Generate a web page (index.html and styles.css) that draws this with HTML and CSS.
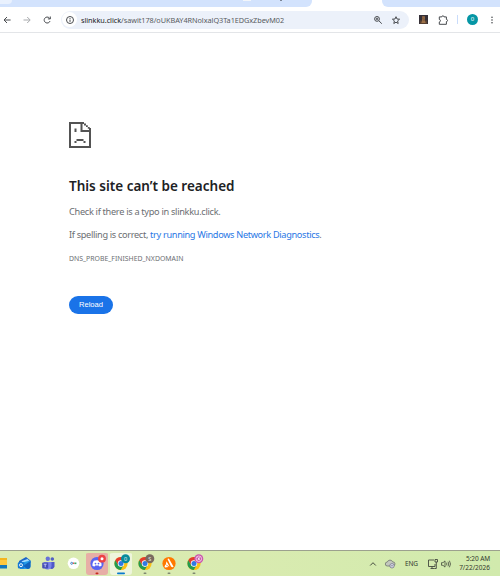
FILE: index.html
```
<!DOCTYPE html>
<html lang="en">
<head>
  <meta charset="UTF-8">
  <meta name="viewport" content="width=device-width, initial-scale=1.0">
  <title>slinkku.click</title>
  <link rel="stylesheet" href="styles.css">
</head>
<body>
  <div class="tabs">
    <div class="tabs-left">
      <span class="tab-btn"></span>
      <span class="tab-icon"></span>
      <span class="tab-mark"></span>
    </div>
    <div class="tabs-right"></div>
  </div>

  <header class="toolbar">
    <svg class="nav back" viewBox="0 0 10 10"><path d="M8.600 5H2.300M5 2L2 5l3 3"/></svg>
    <svg class="nav forward" viewBox="0 0 10 10"><path d="M1.500 5h6.300M5.200 2l3 3-3 3"/></svg>
    <svg class="nav reload" viewBox="0 0 10 10"><path d="M8 6.100A3 3 0 1 1 7.300 2.900L8.100 3.700M8.300 1.500v2.400H5.900"/></svg>
    <div class="omnibox">
      <span class="site-info">
        <svg viewBox="0 0 10 10"><circle cx="5" cy="5" r="3.5"/><path d="M5 4.600v2.300M5 3v.9"/></svg>
      </span>
      <span class="url"><b>slinkku.click</b>/sawit178/oUKBAY4RNolxalQ3Ta1EDGxZbevM02</span>
      <svg class="zoom" viewBox="0 0 10 10"><circle cx="4" cy="3.900" r="2.400"/><path d="M5.900 5.800l2.900 2.900M2.800 3.900h2.400M4 2.700v2.400"/></svg>
      <svg class="star" viewBox="0 0 10 10"><path d="M5 1.700l1 2.300 2.600.2-2 1.700.6 2.600L5 7.200 2.800 8.500l.6-2.600-2-1.700L4 4z"/></svg>
    </div>
    <svg class="ext" viewBox="0 0 10 10"><path fill="#343038" d="M0 0h10v10H0z"/><path fill="#594132" d="M1 6h8v4H1z"/><path fill="#9d7148" d="M3.500 1.500h3V6l1 3h-5l1-3z"/><path fill="#4f352b" d="M4 3h1v1H4zM5 5h1v1H5z"/></svg>
    <svg class="puzzle" viewBox="0 0 12 12"><path d="M2.300 2.900h2.500c0-1.500 2.200-1.500 2.200 0h2.400v2.500c1.500 0 1.500 2.200 0 2.200v2.700H2.300V8c1.500-.1 1.500-2.500 0-2.600z"/></svg>
    <span class="divider"></span>
    <span class="avatar">0</span>
    <svg class="menu" viewBox="0 0 4 10"><circle cx="2" cy="2.200" r=".8"/><circle cx="2" cy="5" r=".8"/><circle cx="2" cy="7.800" r=".8"/></svg>
  </header>

  <main class="error">
    <svg class="sad" viewBox="0 0 22 26">
      <path fill="#535353" d="M0 0h15v2H2v22h18V10h-8.500V2h2v6H20V6h2v20H0z"/>
      <path fill="#535353" d="M15 1.500h2v2h-2zM17 3.300h1.800v1.800H17zM18.800 4.900h1.900v1.800h-1.900z"/>
      <path fill="#535353" d="M5.500 6.500h2V10h-2zM7.500 17h7v2h-7zM5.500 19h2v2h-2zM14.500 19h2v2h-2z"/>
    </svg>
    <h1>This site can’t be reached</h1>
    <p class="hint">Check if there is a typo in slinkku.click.</p>
    <p class="diag">If spelling is correct, <a>try running Windows Network Diagnostics</a>.</p>
    <div class="code">DNS_PROBE_FINISHED_NXDOMAIN</div>
    <button>Reload</button>
  </main>

  <footer class="taskbar">
    <div class="apps">
      <div class="app"><svg viewBox="0 0 24 26"><path fill="#f4b51e" d="M0 8h19v6H0z"/><path fill="#ffc83d" d="M0 10h19v5H0z"/><path fill="#1478bd" d="M0 15h19v3.500H0z"/></svg></div>
      <div class="app"><svg viewBox="0 0 24 26"><path fill="#1b66c9" d="M7 11l7-4 4.500 3.500V13H7z"/><path fill="#9fdcff" d="M9.500 11.200l6-2.200 2 2-5 3z"/><path fill="#249be8" d="M8 13l10.500-2.500V16a3 3 0 0 1-3 3H8z"/><path fill="#1262bd" d="M11 16l7.500-5V16a3 3 0 0 1-3 3z"/><rect x="5.8" y="12" width="6.500" height="6.500" rx="1.500" fill="#1478d4"/><circle cx="9" cy="15.200" r="1.500" fill="none" stroke="#fff" stroke-width=".9"/></svg></div>
      <div class="app"><svg viewBox="0 0 24 26"><circle cx="11.800" cy="8.800" r="2.200" fill="#6771d8"/><circle cx="16.300" cy="9" r="1.800" fill="#515fc4"/><path fill="#5059c9" d="M14 12h4.500v4.500a3 3 0 0 1-4.500 2z"/><path fill="#7b83eb" d="M8 12h7.500v4.500a4 4 0 0 1-7 1.500z"/><rect x="6.200" y="12.500" width="6" height="6" rx="1" fill="#464eb8"/><path stroke="#d9dcff" stroke-width=".8" d="M7.700 14.200h3M9.200 14.200v3"/></svg></div>
      <div class="app"><svg viewBox="0 0 24 26"><circle cx="12.500" cy="13.300" r="5.800" fill="#fff"/><circle cx="10.700" cy="13.300" r="1" fill="none" stroke="#347bc4" stroke-width=".9"/><path stroke="#e8534a" stroke-width="1.400" d="M12 13.300h1.300"/><path stroke="#37a666" stroke-width="1.600" d="M13.400 13.300h2"/></svg></div>
      <div class="app alert"><svg viewBox="0 0 24 26"><circle cx="12" cy="13.500" r="6.600" fill="#5865f2"/><path fill="#fff" d="M8.800 10.800q3.200-1.300 6.400 0 1.600 2.400 1.500 4.700-1 .9-2.300 1l-.6-1h-3.600l-.6 1q-1.300-.1-2.300-1-.1-2.300 1.500-4.700z"/><circle cx="10.500" cy="13.600" r=".9" fill="#5865f2"/><circle cx="13.500" cy="13.600" r=".9" fill="#5865f2"/><circle cx="17" cy="8.700" r="3.900" fill="#ed4245"/><circle cx="17" cy="8.700" r="1.500" fill="#fff"/><rect x="10.500" y="22.400" width="3" height="1.800" rx=".9" fill="#c42b1c"/></svg></div>
      <div class="app active"><svg viewBox="0 0 24 26"><use href="#chrome"/><circle cx="16.500" cy="8.800" r="4.500" fill="#078b9c"/><text x="16.500" y="10.800">0</text><rect x="8" y="22.400" width="8" height="1.800" rx=".9" fill="#087bce"/></svg></div>
      <div class="app"><svg viewBox="0 0 24 26"><use href="#chrome"/><circle cx="16.800" cy="8.800" r="4.500" fill="#79695f"/><text x="16.800" y="10.800">S</text><rect class="running" x="10.500" y="22.400" width="3" height="1.600" rx=".8"/></svg></div>
      <div class="app"><svg viewBox="0 0 24 26"><circle cx="12" cy="13.500" r="6.600" fill="#ff7800"/><path fill="#fff" d="M10.500 9q1-1 1.800.2l4.300 7.600q-1.200 1-2.600-.2zM9.500 11.300l3 5.300-3.700-2.200zM8.300 14.600l3.300 2.300-3.500.5q-.8-.3-.4-1.200z"/><rect class="running" x="10.500" y="22.400" width="3" height="1.600" rx=".8"/></svg></div>
      <div class="app"><svg viewBox="0 0 24 26"><use href="#chrome"/><circle cx="16.800" cy="8.800" r="4.500" fill="#c957ac"/><circle cx="16.800" cy="8.800" r="2.800" fill="none" stroke="#fbd8ee" stroke-width=".8"/><path stroke="#fff" stroke-width=".8" d="M15.800 7.300l2 3M17.800 7.300l-2 3"/><rect class="running" x="10.500" y="22.400" width="3" height="1.600" rx=".8"/></svg></div>
    </div>
    <div class="tray">
      <svg class="chevron" viewBox="0 0 8 8"><path d="M1.200 5.500L4 2.700l2.800 2.800"/></svg>
      <svg class="cloud" viewBox="0 0 12 12"><path fill="#c3c8bd" stroke="#6f746f" stroke-width=".8" d="M3.300 8a2 2 0 0 1 0-4 2.900 2.900 0 0 1 5.400-.1 2 2 0 0 1 .4 4.100z"/><circle cx="8" cy="7.800" r="2.200" fill="#e5e6ef" stroke="#70718a" stroke-width=".8"/><path stroke="#70718a" stroke-width=".8" d="M6.800 7.800h2.400"/></svg>
      <span class="lang">ENG</span>
      <svg class="network" viewBox="0 0 12 12"><path d="M7 2H1.500v6.500H8V6M3.500 10.500h4M5 8.500v2M8 1.500h2.500v2.500H8zM9.300 4v6.500H7.500"/></svg>
      <svg class="volume" viewBox="0 0 12 12"><path d="M1.500 4.700h1.500L5 2.900v6.200L3 7.300H1.500zM6.500 4.700q.8 1.300 0 2.600M8 3.700q1.500 2.300 0 4.600M9.400 2.700q2.200 3.300 0 6.600"/></svg>
      <div class="clock"><span class="time">5:20 AM</span><span class="date">7/22/2026</span></div>
    </div>
  </footer>

  <svg class="defs">
    <defs>
      <g id="chrome">
        <circle cx="12" cy="13.500" r="6.600" fill="#fbc116"/>
        <path fill="#e33b2e" d="M6.300 10.200a6.600 6.600 0 0 1 11.400 0H12l-2.900 5z"/>
        <path fill="#249b50" d="M6.300 10.200l2.900 5 2.800 1.600 2.600-1.500-2.900 4.800a6.600 6.600 0 0 1-5.400-9.900z"/>
        <circle cx="12" cy="13.500" r="3.200" fill="#fff"/>
        <circle cx="12" cy="13.500" r="2.500" fill="#3079e3"/>
      </g>
    </defs>
  </svg>
</body>
</html>
```

FILE: styles.css
```
* {
  box-sizing: border-box;
}

body {
  margin: 0;
  width: 500px;
  height: 576px;
  overflow: hidden;
  display: flex;
  flex-direction: column;
  background: #fff;
  font-family: "Noto Sans", "Open Sans", sans-serif;
}

svg {
  display: block;
  flex: none;
}

.tabs {
  display: flex;
  justify-content: space-between;
  height: 7px;
  flex: none;
}

.tabs-left {
  display: flex;
  width: 312px;
  background: #d3e3fd;
  border-bottom-right-radius: 6px;
}

.tab-btn {
  width: 12px;
  height: 4px;
  background: #e9f1fe;
  border-bottom-right-radius: 4px;
}

.tab-icon {
  width: 8px;
  height: 1px;
  margin-left: 231px;
  background: #f3f6fa;
}

.tab-mark {
  width: 2px;
  height: 1px;
  margin-left: 29px;
  background: #7c8696;
}

.tabs-right {
  width: 118px;
  background: #d3e3fd;
  border-bottom-left-radius: 6px;
}

.toolbar {
  display: flex;
  align-items: center;
  height: 26px;
  flex: none;
  padding-left: 2px;
  border-bottom: 1px solid #e3e5e8;
}

.toolbar svg {
  fill: none;
  stroke: #484b4f;
  stroke-width: 1;
}

.nav {
  width: 10px;
  height: 10px;
}

.toolbar .forward {
  margin-left: 10px;
  stroke: #a7a9ac;
}

.reload {
  margin-left: 10px;
}

.omnibox {
  display: flex;
  align-items: center;
  width: 348px;
  height: 18px;
  margin-left: 9px;
  padding: 0 8px 0 1px;
  border-radius: 9px;
  background: #ecf1fa;
}

.site-info {
  display: flex;
  align-items: center;
  justify-content: center;
  width: 15px;
  height: 15px;
  border-radius: 50%;
  background: #fff;
}

.site-info svg {
  width: 10px;
  height: 10px;
}

.url {
  flex: 1;
  margin-left: 4px;
  font-size: 7.3px;
  line-height: 18px;
  letter-spacing: -0.05px;
  color: #575b60;
  white-space: nowrap;
}

.url b {
  font-weight: 400;
  color: #202124;
}

.zoom {
  width: 10px;
  height: 10px;
}

.star {
  width: 10px;
  height: 10px;
  margin-left: 8px;
}

.toolbar .ext {
  width: 9px;
  height: 9px;
  margin-left: 10px;
  stroke: none;
}

.puzzle {
  width: 12px;
  height: 12px;
  margin-left: 9px;
}

.divider {
  width: 1px;
  height: 9px;
  margin-left: 8px;
  background: #c9dcfb;
}

.avatar {
  width: 11px;
  height: 11px;
  margin-left: 9px;
  border-radius: 50%;
  background: #0596a5;
  color: #fff;
  font-size: 6px;
  line-height: 11px;
  text-align: center;
}

.toolbar .menu {
  width: 4px;
  height: 10px;
  margin-left: 12px;
  fill: #484b4f;
  stroke: none;
}

.error {
  flex: 1;
  padding: 89px 0 0 69px;
  color: #6b6e72;
}

.sad {
  width: 22px;
  height: 26px;
}

h1 {
  margin: 28px 0 0;
  font-size: 13.5px;
  font-weight: 600;
  line-height: 20px;
  letter-spacing: 0;
  color: #202124;
  white-space: nowrap;
}

p {
  margin: 0;
  font-size: 9.2px;
  line-height: 14px;
  letter-spacing: -0.33px;
  white-space: nowrap;
}

.hint {
  margin-top: 9px;
  letter-spacing: -0.3px;
}

.diag {
  margin-top: 9px;
}

.diag a {
  color: #2977e5;
}

.code {
  margin-top: 12px;
  font-size: 6.9px;
  line-height: 10px;
  letter-spacing: 0;
}

button {
  display: block;
  width: 44px;
  height: 18px;
  margin-top: 32px;
  padding: 0;
  border: none;
  border-radius: 9px;
  background: #1a73e8;
  color: #fff;
  font-family: "Liberation Sans", Arial, sans-serif;
  font-size: 7.6px;
  line-height: 18px;
}

.taskbar {
  display: flex;
  justify-content: space-between;
  height: 26px;
  flex: none;
  border-top: 1px solid #9ca18e;
  background: linear-gradient(90deg, #dbebb3, #d9ebb0 50%, #d1eaad);
}

.apps {
  display: flex;
  margin: -1px 0 0 -12px;
}

.app {
  width: 24.2px;
  height: 26px;
}

.app svg {
  width: 24px;
  height: 26px;
}

.app.alert,
.app.active {
  background: #e7aea6;
  border-radius: 4px;
  background-clip: padding-box;
  border: solid transparent;
  border-width: 3px 1px 1px;
}

.app.active {
  background-color: #eef5dc;
}

.app.alert svg,
.app.active svg {
  margin: -3px -1px;
}

.app text {
  fill: #e3f0f0;
  font-size: 5.5px;
  text-anchor: middle;
}

.running {
  fill: #7d8770;
}

.tray {
  display: flex;
  align-items: center;
  padding-right: 10px;
  color: #33392e;
}

.tray svg {
  fill: none;
  stroke: #444a3e;
}

.chevron {
  width: 8px;
  height: 8px;
}

.cloud {
  width: 12px;
  height: 12px;
  margin-left: 7px;
}

.lang {
  width: 14px;
  margin-left: 9px;
  font-size: 6.5px;
  letter-spacing: -0.1px;
}

.tray .network {
  width: 12px;
  height: 12px;
  margin-left: 8px;
  stroke-width: 0.9;
}

.tray .volume {
  width: 12px;
  height: 12px;
  margin-left: 1px;
  stroke-width: 0.8;
}

.clock {
  display: flex;
  flex-direction: column;
  align-items: flex-end;
  width: 38px;
  font-size: 6.5px;
  line-height: 8.5px;
  white-space: nowrap;
}

.time {
  letter-spacing: -0.1px;
}

.defs {
  position: absolute;
  width: 0;
  height: 0;
}
```
